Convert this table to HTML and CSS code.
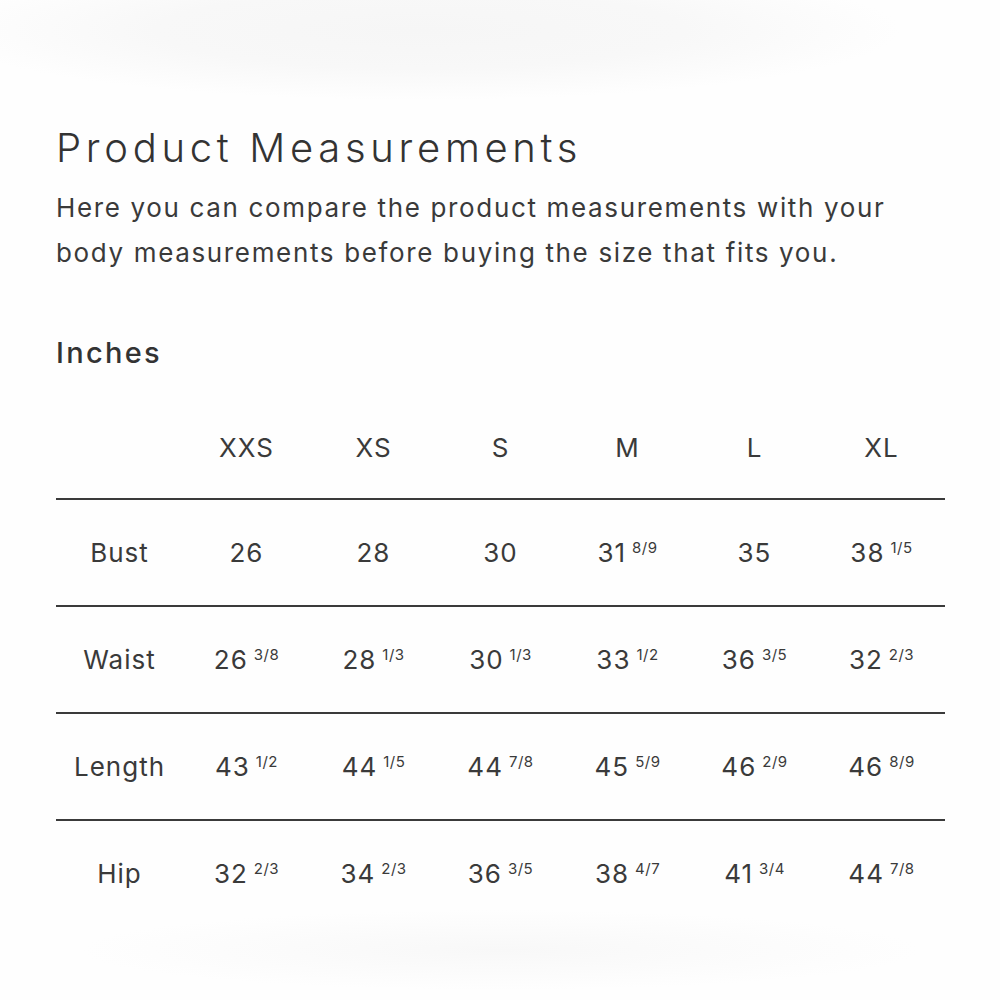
FILE: index.html
```html
<!DOCTYPE html>
<html lang="en">
<head>
<meta charset="utf-8">
<title>Product Measurements</title>
<link rel="stylesheet" href="styles.css">
</head>
<body>
<main class="page">
  <h1 class="title">Product Measurements</h1>
  <p class="intro">Here you can compare the product measurements with your<br>body measurements before buying the size that fits you.</p>
  <h2 class="unit">Inches</h2>
  <table class="chart">
    <thead>
      <tr>
        <th></th><th>XXS</th><th>XS</th><th>S</th><th>M</th><th>L</th><th>XL</th>
      </tr>
    </thead>
    <tbody>
      <tr>
        <th>Bust</th>
        <td>26</td><td>28</td><td>30</td>
        <td>31<sup class="frac">8/9</sup></td>
        <td>35</td>
        <td>38<sup class="frac">1/5</sup></td>
      </tr>
      <tr>
        <th>Waist</th>
        <td>26<sup class="frac">3/8</sup></td>
        <td>28<sup class="frac">1/3</sup></td>
        <td>30<sup class="frac">1/3</sup></td>
        <td>33<sup class="frac">1/2</sup></td>
        <td>36<sup class="frac">3/5</sup></td>
        <td>32<sup class="frac">2/3</sup></td>
      </tr>
      <tr>
        <th>Length</th>
        <td>43<sup class="frac">1/2</sup></td>
        <td>44<sup class="frac">1/5</sup></td>
        <td>44<sup class="frac">7/8</sup></td>
        <td>45<sup class="frac">5/9</sup></td>
        <td>46<sup class="frac">2/9</sup></td>
        <td>46<sup class="frac">8/9</sup></td>
      </tr>
      <tr>
        <th>Hip</th>
        <td>32<sup class="frac">2/3</sup></td>
        <td>34<sup class="frac">2/3</sup></td>
        <td>36<sup class="frac">3/5</sup></td>
        <td>38<sup class="frac">4/7</sup></td>
        <td>41<sup class="frac">3/4</sup></td>
        <td>44<sup class="frac">7/8</sup></td>
      </tr>
    </tbody>
  </table>
</main>
</body>
</html>
```

FILE: styles.css
```css
html, body {
  margin: 0;
  padding: 0;
}

body {
  width: 1000px;
  height: 1000px;
  overflow: hidden;
  font-family: Inter, "DejaVu Sans", sans-serif;
  color: #363636;
  background:
    radial-gradient(ellipse 480px 70px at 420px 30px, #f6f6f6 0%, #f8f8f8 55%, rgba(255,255,255,0) 100%),
    radial-gradient(ellipse 420px 40px at 500px 950px, #f8f8f8 0%, rgba(255,255,255,0) 100%),
    #fefefe;
}

.page {
  padding: 123px 55px 0 56px;
}

.title {
  margin: 0;
  font-size: 40px;
  line-height: 50px;
  font-weight: 300;
  letter-spacing: 4.7px;
  color: #333;
}

.intro {
  margin: 12px 0 0;
  font-size: 26px;
  line-height: 45px;
  font-weight: 400;
  letter-spacing: 1.65px;
  color: #3a3a3a;
}

.unit {
  margin: 60px 0 0;
  font-size: 29px;
  line-height: 36px;
  font-weight: 500;
  letter-spacing: 2.3px;
  color: #333;
}

.chart {
  margin-top: 22px;
  width: 889px;
  border-collapse: collapse;
  table-layout: fixed;
}

.chart th,
.chart td {
  height: 105px;
  padding: 0;
  text-align: center;
  vertical-align: middle;
  font-size: 26px;
  font-weight: 400;
  letter-spacing: 1px;
  color: #3a3a3a;
  white-space: nowrap;
}

.chart thead th {
  height: 101px;
  padding-top: 4px;
  padding-bottom: 0;
}

.chart tr {
  border-bottom: 2px solid #3a3a3a;
}

.chart tbody tr:last-child {
  border-bottom: none;
}

.frac {
  font-size: 15px;
  letter-spacing: 0.5px;
  vertical-align: 9px;
  line-height: 0;
  margin-left: 6px;
}
```
